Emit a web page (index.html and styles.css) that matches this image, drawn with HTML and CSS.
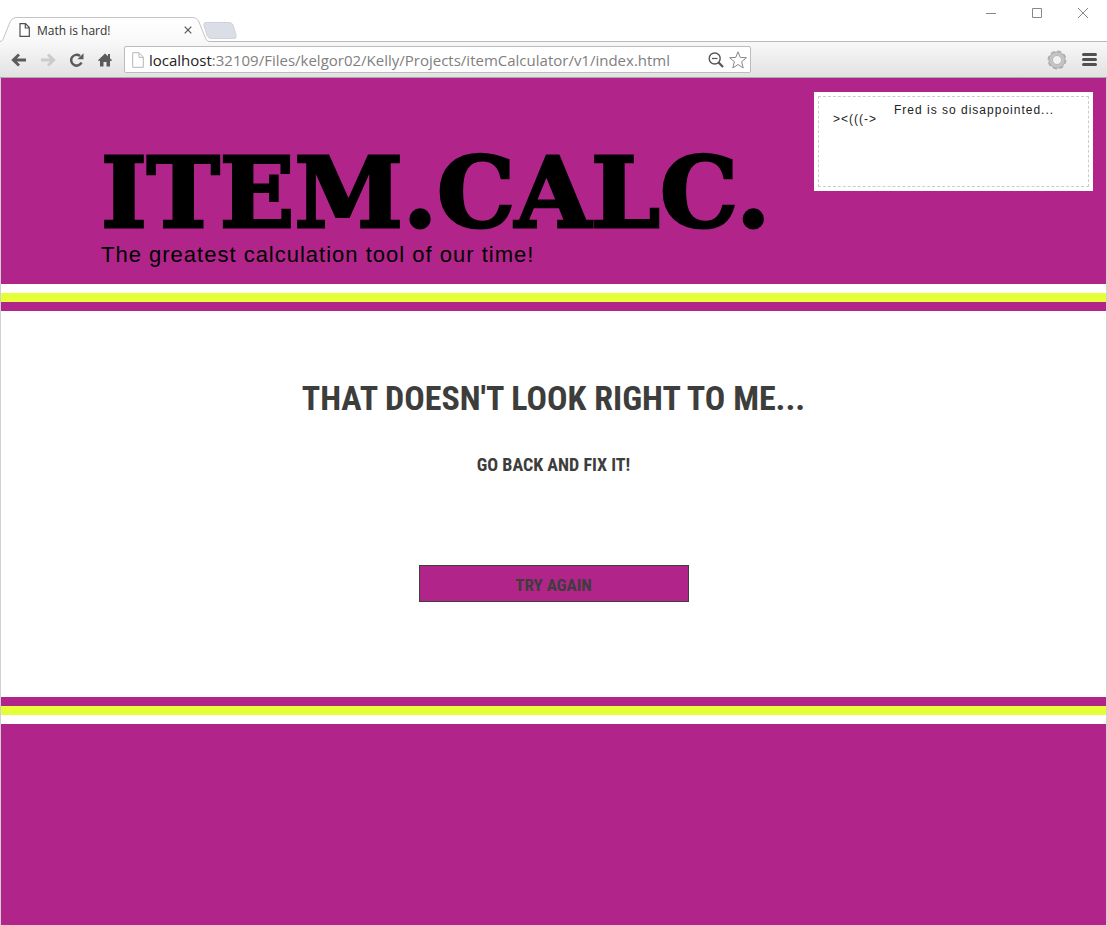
FILE: index.html
```html
<!DOCTYPE html>
<html lang="en">
<head>
<meta charset="utf-8">
<meta name="viewport" content="width=device-width, initial-scale=1">
<title>Math is hard!</title>
<link rel="stylesheet" href="styles.css">
</head>
<body>
<div class="browser">
  <div class="titlebar">
    <div class="tab">
      <svg class="tab-shape" width="209" height="26" viewBox="0 0 209 26" aria-hidden="true">
        <defs><linearGradient id="tabfill" x1="0" y1="0" x2="0" y2="1"><stop offset="0" stop-color="#fff"/><stop offset="1" stop-color="#f8f8f8"/></linearGradient></defs>
        <path d="M0 24.5C3 24 3 22 4 20L10 5Q12 .5 16 .5H192Q197 .5 199 5L205 20Q206 24 209 24.5V26H0Z" fill="url(#tabfill)"/>
        <path d="M0 24.5C3 24 3 22 4 20L10 5Q12 .5 16 .5H192Q197 .5 199 5L205 20Q206 24 209 24.5" fill="none" stroke="#c4c4c4"/>
      </svg>
      <div class="tab-content">
        <svg width="11" height="14" viewBox="0 0 11 14" aria-hidden="true"><path d="M1 .7H6.5L10.3 4.5V13.3H1ZM6.3 1V5H10" fill="#fff" stroke="#505050" stroke-width="1.2"/></svg>
        <span class="tab-title">Math is hard!</span>
        <button class="plain" type="button" aria-label="Close tab"><svg width="8" height="8" viewBox="0 0 8 8"><path d="M.7 .7L7.3 7.3M7.3 .7L.7 7.3" stroke="#555" stroke-width="1.2"/></svg></button>
      </div>
    </div>
    <button class="plain new-tab" type="button" aria-label="New tab"><svg width="34" height="17" viewBox="0 0 34 17"><path d="M3 .5H26Q29 .5 30 3L33 13Q34 16.500 31 16.500H8Q5 16.500 4 13L1 4Q0 .5 3 .5Z" fill="#dadee6" stroke="#cfd2d9"/></svg></button>
    <div class="window-controls">
      <button class="plain" type="button" aria-label="Minimize"><svg width="12" height="12" viewBox="0 0 12 12"><path d="M1 6.500H11" stroke="#888"/></svg></button>
      <button class="plain" type="button" aria-label="Maximize"><svg width="12" height="12" viewBox="0 0 12 12"><path d="M1.500 1.500H10.500V10.500H1.500Z" fill="none" stroke="#888"/></svg></button>
      <button class="plain" type="button" aria-label="Close window"><svg width="12" height="12" viewBox="0 0 12 12"><path d="M1 1L11 11M11 1L1 11" stroke="#888"/></svg></button>
    </div>
  </div>
  <div class="toolbar">
    <div class="nav">
      <button class="plain" type="button" aria-label="Back"><svg width="16" height="14" viewBox="0 0 16 14"><path d="M15 7H3M8 1.500L2.300 7L8 12.500" fill="none" stroke="#5b5b5b" stroke-width="2.800"/></svg></button>
      <button class="plain" type="button" aria-label="Forward"><svg width="16" height="14" viewBox="0 0 16 14"><path d="M1 7H13M8 1.500L13.700 7L8 12.500" fill="none" stroke="#cbcbcb" stroke-width="2.800"/></svg></button>
      <button class="plain" type="button" aria-label="Reload"><svg width="16" height="14" viewBox="0 0 16 14"><path d="M12.500 9.500A5.400 5.400 0 1 1 11 3" fill="none" stroke="#5b5b5b" stroke-width="2.500"/><path d="M14.500 .3V6.300H8.500Z" fill="#5b5b5b"/></svg></button>
      <button class="plain" type="button" aria-label="Home"><svg width="14" height="14" viewBox="0 0 14 14"><path d="M7 .5L10 3.300V1H12V5.200L14 7.200L13 8.300L12 7.400V13.500H8.500V9H5.500V13.500H2V7.400L1 8.300L0 7.200Z" fill="#5b5b5b"/></svg></button>
    </div>
    <div class="address">
      <svg width="12" height="16" viewBox="0 0 12 16" aria-hidden="true"><path d="M.7 .7H7L11.300 5V15.300H.7ZM7 1V5.300H11" fill="#fff" stroke="#b6b6b6"/></svg>
      <a class="url" href="#"><span class="host">localhost</span>:32109/Files/kelgor02/Kelly/Projects/itemCalculator/v1/index.html</a>
      <button class="plain" type="button" aria-label="Zoom"><svg width="16" height="16" viewBox="0 0 16 16"><circle cx="6.700" cy="6.500" r="5.500" fill="#fff" stroke="#555" stroke-width="1.400"/><path d="M4 6.500H9.500" stroke="#555" stroke-width="1.200"/><path d="M10.600 10.500L15 15" stroke="#555" stroke-width="2.200"/></svg></button>
      <button class="plain" type="button" aria-label="Bookmark"><svg width="18" height="18" viewBox="0 0 18 18"><path d="M9 .8L11.200 6.400L17.400 6.700L12.600 10.700L14.200 17L9 13.500L3.800 17L5.400 10.700L.6 6.700L6.800 6.400Z" fill="#fff" stroke="#888"/></svg></button>
    </div>
    <div class="tools">
      <button class="plain" type="button" aria-label="Extension settings"><svg width="20" height="20" viewBox="0 0 20 20"><circle cx="10" cy="10" r="8.300" fill="none" stroke="#aaa" stroke-width="2.200" stroke-dasharray="4 2.520"/><circle cx="10" cy="10" r="6.500" fill="#f2f2f2" stroke="#c4c4c4" stroke-width="3.800"/><circle cx="10" cy="10" r="8" fill="none" stroke="#aaa" stroke-width=".8"/><circle cx="10" cy="10" r="4.500" fill="#f2f2f2" stroke="#aaa" stroke-width=".8"/></svg></button>
      <button class="plain" type="button" aria-label="Menu"><svg width="15" height="13" viewBox="0 0 15 13"><path d="M1.500 1.500H13.500M1.500 6.500H13.500M1.500 11.500H13.500" stroke="#505050" stroke-width="3" stroke-linecap="round"/></svg></button>
    </div>
  </div>
  <div class="page">
    <header class="banner">
      <div class="brand">
        <h1>ITEM.CALC.</h1>
        <p>The greatest calculation tool of our time!</p>
      </div>
      <aside class="note"><div class="note-inner"><span class="fish">&gt;&lt;(((-&gt;</span><p>Fred is so disappointed...</p></div></aside>
    </header>
    <div class="stripes"></div>
    <main class="message">
      <h2>THAT DOESN'T LOOK RIGHT TO ME...</h2>
      <h3>GO BACK AND FIX IT!</h3>
      <button class="retry" type="button">TRY AGAIN</button>
    </main>
    <div class="stripes flipped"></div>
    <footer class="footer"></footer>
  </div>
</div>
</body>
</html>
```
FILE: styles.css
```css
* { box-sizing: border-box; }
body { margin: 0; background: #fff; font-family: "Liberation Sans", Arial, sans-serif; }
h1, h2, h3, p { margin: 0; }
button { font: inherit; cursor: pointer; }
.plain { display: flex; padding: 0; border: 0; background: none; }

.browser { display: flex; flex-direction: column; min-height: 100vh; }
.titlebar { display: flex; align-items: flex-end; height: 42px; border-bottom: 1px solid #b9b9b9; }
.tab { display: grid; width: 209px; height: 26px; margin-bottom: -2px; }
.tab-shape, .tab-content { grid-area: 1 / 1; }
.tab-content { display: flex; align-items: center; gap: 7px; padding: 0 17px 0 19px; z-index: 1; }
.tab-title { flex: 1; font: 12px "Open Sans", "Noto Sans", sans-serif; color: #333; }
.new-tab { margin: 0 0 2px -6px; }
.window-controls { display: flex; align-self: flex-start; gap: 34px; margin-left: auto; padding: 7px 18px 0 0; }

.toolbar { display: flex; align-items: center; height: 36px; padding: 0 10px 0 11px; background: linear-gradient(#f8f8f8, #e2e2e2); border-bottom: 1px solid #aaa; }
.nav { display: flex; align-items: center; gap: 13px; width: 113px; }
.address { display: flex; align-items: center; gap: 5px; flex: 0 1 627px; min-width: 0; height: 27px; padding: 0 3px 0 7px; background: #fff; border: 1px solid #bcbcbc; border-radius: 2px; }
.url { flex: 1; min-width: 0; overflow: hidden; white-space: nowrap; text-decoration: none; color: #808080; font: 15px/24px "Open Sans", "Noto Sans", sans-serif; }
.host { color: #222; }
.tools { display: flex; align-items: center; gap: 15px; margin-left: auto; }

.page { display: flex; flex-direction: column; flex: 1; border: solid #d0d0d0; border-width: 0 1px; }
.banner { display: flex; justify-content: space-between; align-items: flex-start; padding: 14px 13px 18px 100px; background: #b1258a; }
.brand { padding-top: 50px; color: #000; }
.brand h1 { font: bold 98px/101px "DejaVu Serif", serif; -webkit-text-stroke: 3px #000; }
.brand p { font-size: 22px; line-height: 23px; letter-spacing: 1px; }
.note { flex: 0 0 279px; padding: 4px; background: #fff; }
.note-inner { display: flex; align-items: flex-start; gap: 17px; min-height: 91px; padding: 6px 14px; border: 1px dashed #ccc; color: #222; font-size: 12px; line-height: 15px; letter-spacing: 1px; }
.fish { padding-top: 9px; }
.stripes { height: 27px; background: linear-gradient(#fff 9px, #e7ff3a 9px 18px, #b1258a 18px); }
.flipped { background: linear-gradient(#b1258a 9px, #e7ff3a 9px 18px, #fff 18px); }
.message { display: flex; flex-direction: column; align-items: center; padding: 62px 16px 95px; color: #3d3d3b; text-align: center; font-family: "Roboto Condensed", "Liberation Sans Narrow", "Liberation Sans", sans-serif; }
.message h2 { font-size: 34px; line-height: 50px; }
.message h3 { margin-top: 30px; font-size: 18px; line-height: 24px; }
.retry { width: 270px; height: 37px; margin-top: 88px; padding: 2px 0 0; border: 1px solid #3d3d3b; background: #b1258a; color: #3d3d3b; font-size: 17px; font-weight: bold; }
.footer { flex: 1; min-height: 200px; background: #b1258a; }
```
